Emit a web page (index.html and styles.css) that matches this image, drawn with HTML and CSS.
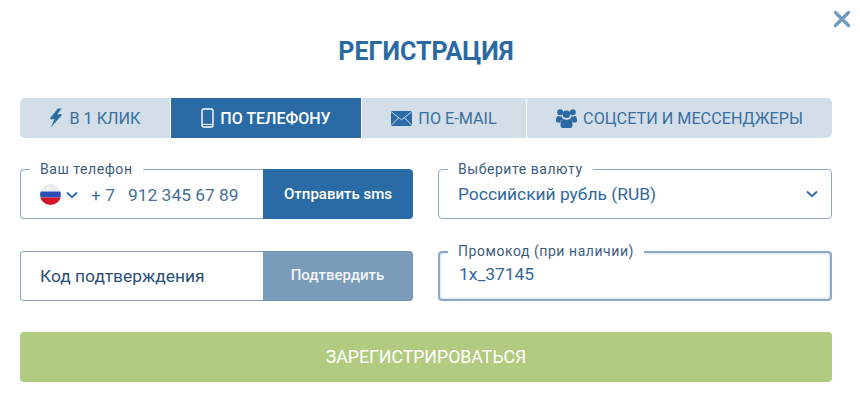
FILE: index.html
```html
<!DOCTYPE html>
<html lang="ru">
<head>
<meta charset="utf-8">
<title>Регистрация</title>
<link rel="stylesheet" href="styles.css">
</head>
<body>
<div class="modal">
  <svg class="close" viewBox="0 0 18 18" width="18" height="18"><path d="M2.500 2.500 15.500 15.500M15.500 2.500 2.500 15.500" fill="none" stroke="#6f9cc4" stroke-width="3.400" stroke-linecap="round"/></svg>
  <h1 class="title">РЕГИСТРАЦИЯ</h1>
  <div class="tabs">
    <div class="tab tab-1">
      <svg class="ico" width="14" height="20" viewBox="0 0 14 20"><path d="M9 0.500 1.500 9.500 1.500 11.500 5.500 11 1.800 19.500 12.500 7.500 12.500 6 8.200 6.500 12.500 0.500Z" fill="#2a6aa5"/></svg>
      <span>В 1 КЛИК</span>
    </div>
    <div class="tab tab-2 active">
      <svg class="ico" width="13" height="20" viewBox="0 0 13 20"><rect x="1" y="1" width="11" height="18" rx="1.800" fill="none" stroke="#fff" stroke-width="1.400"/><path d="M1 16.400H12" stroke="#fff" stroke-width="1"/></svg>
      <span>ПО ТЕЛЕФОНУ</span>
    </div>
    <div class="tab tab-3">
      <svg class="ico" width="21" height="15" viewBox="0 0 21 15"><rect width="21" height="15" rx="1.500" fill="#2a6aa5"/><path d="M0.500 1 10.500 8.800 20.500 1M0.500 14 7.500 6.800M20.500 14 13.500 6.800" fill="none" stroke="#d3dee8" stroke-width="1"/></svg>
      <span>ПО E-MAIL</span>
    </div>
    <div class="tab tab-4">
      <svg class="ico" width="21" height="19" viewBox="0 0 21 19"><g fill="#2a6aa5"><circle cx="4.200" cy="3.200" r="3"/><circle cx="16.800" cy="3.200" r="3"/><circle cx="10.500" cy="5.200" r="3.800"/><path d="M0 11.500C0 8 1.200 7 2.600 7 3.400 7.500 4.600 7.800 5.800 7.400 6 8.500 6.600 9.500 7.200 10 5.800 10.500 4.800 11.800 4.200 13.500H1.200C0.400 13.500 0 12.700 0 11.500Z"/><path d="M21 11.500C21 8 19.800 7 18.400 7 17.600 7.500 16.400 7.800 15.200 7.400 15 8.500 14.400 9.500 13.800 10 15.200 10.500 16.200 11.800 16.800 13.500H19.800C20.600 13.500 21 12.700 21 11.500Z"/><path d="M7.500 10C8.500 11 12.500 11 13.500 10 15.500 10 16.500 12.500 16.500 16 16.500 18 15.500 19 14.500 19H6.500C5.500 19 4.500 18 4.500 16 4.500 12.500 5.500 10 7.500 10Z"/></g></svg>
      <span>СОЦСЕТИ И МЕССЕНДЖЕРЫ</span>
    </div>
  </div>
  <div class="fields">
    <div class="field">
      <div class="label">Ваш телефон</div>
      <div class="value-box phone">
        <svg class="flag" width="21" height="21" viewBox="0 0 21 21">
          <defs><clipPath id="flag-clip"><circle cx="10.500" cy="10.500" r="10.500"/></clipPath></defs>
          <g clip-path="url(#flag-clip)"><rect width="21" height="7.500" fill="#ececf0"/><rect y="7.500" width="21" height="6" fill="#2a4fb5"/><rect y="13.500" width="21" height="7.500" fill="#d8142c"/></g>
        </svg>
        <svg class="chev" width="12" height="8" viewBox="0 0 12 8"><path d="M1 1.500 6 6.200 11 1.500" fill="none" stroke="#2a6aa5" stroke-width="1.800"/></svg>
        <span class="prefix">+ 7</span>
        <span class="number">912 345 67 89</span>
      </div>
      <div class="btn btn-sms">Отправить sms</div>
    </div>
    <div class="field">
      <div class="label">Выберите валюту</div>
      <div class="value-box currency">
        <span>Российский рубль (RUB)</span>
        <svg width="12" height="8" viewBox="0 0 12 8"><path d="M1 1.500 6 6.200 11 1.500" fill="none" stroke="#2a6aa5" stroke-width="1.900"/></svg>
      </div>
    </div>
    <div class="field">
      <div class="value-box code">Код подтверждения</div>
      <div class="btn btn-confirm">Подтвердить</div>
    </div>
    <div class="field">
      <div class="label">Промокод (при наличии)</div>
      <div class="value-box promo">1x_37145</div>
    </div>
  </div>
  <div class="submit">ЗАРЕГИСТРИРОВАТЬСЯ</div>
</div>
</body>
</html>
```
FILE: styles.css
```css
* { box-sizing: border-box; }
html, body { margin: 0; padding: 0; background: #fff; }
body { width: 860px; height: 407px; overflow: hidden; font-family: Roboto, "Liberation Sans", sans-serif; }
.modal { position: relative; padding: 0 28px 0 20px; height: 407px; }
.close { position: absolute; top: 10px; right: 9px; }
.title { margin: 0; padding-top: 37px; height: 98px; line-height: 30px; text-align: center; font-size: 25px; font-weight: 700; color: #2a6aa3; }
.tabs { display: flex; height: 40px; gap: 1px; font-size: 16.200px; color: #3a6f9f; }
.tab { display: flex; align-items: center; justify-content: center; gap: 6px; background: #d3dee8; }
.tab-1 { width: 150px; border-radius: 5px 0 0 5px; }
.tab-2 { width: 190px; }
.tab-3 { width: 164px; }
.tab-4 { width: 305px; border-radius: 0 5px 5px 0; }
.tab.active { background: #2a6aa5; color: #fff; font-weight: 500; font-size: 16px; }
.fields { display: grid; grid-template-columns: 393px 394px; column-gap: 25px; row-gap: 32px; margin-top: 31px; }
.field { position: relative; display: flex; height: 50px; }
.label { position: absolute; top: -8px; left: 10px; padding: 0 10px; background: #fff; font-size: 14px; line-height: 16px; color: #3d5c7c; letter-spacing: 0.550px; }
.value-box { flex: 1; display: flex; align-items: center; border: 1px solid #8aa7c4; border-radius: 4px; background: #fff; padding-left: 19px; font-size: 17.400px; color: #2f689c; }
.field > .value-box:not(:last-child) { border-right: 0; border-radius: 4px 0 0 4px; }
.phone { color: #456f99; padding-top: 1px; }
.flag { margin-right: 5px; }
.chev { margin-right: 13px; }
.prefix { margin-right: 13px; }
.currency { justify-content: space-between; padding-right: 13px; }
.code { color: #2b4f75; }
.promo { border: 2px solid #8aa9c8; padding-left: 19px; padding-bottom: 4px; box-shadow: inset 0 0 3px rgba(60, 110, 160, .35); }
.btn { display: flex; align-items: center; justify-content: center; width: 150px; border-radius: 0 4px 4px 0; color: #fff; font-size: 15px; font-weight: 500; }
.btn-sms { background: #2a6aa5; }
.btn-confirm { background: #7a9cba; color: #f1f5f8; padding-bottom: 2px; border: 1px solid #6f93b3; border-left: 0; }
.submit { display: flex; align-items: center; justify-content: center; margin-top: 31px; height: 50px; border-radius: 4px; background: #b1cb80; color: #fff; font-size: 17.700px; }
```
